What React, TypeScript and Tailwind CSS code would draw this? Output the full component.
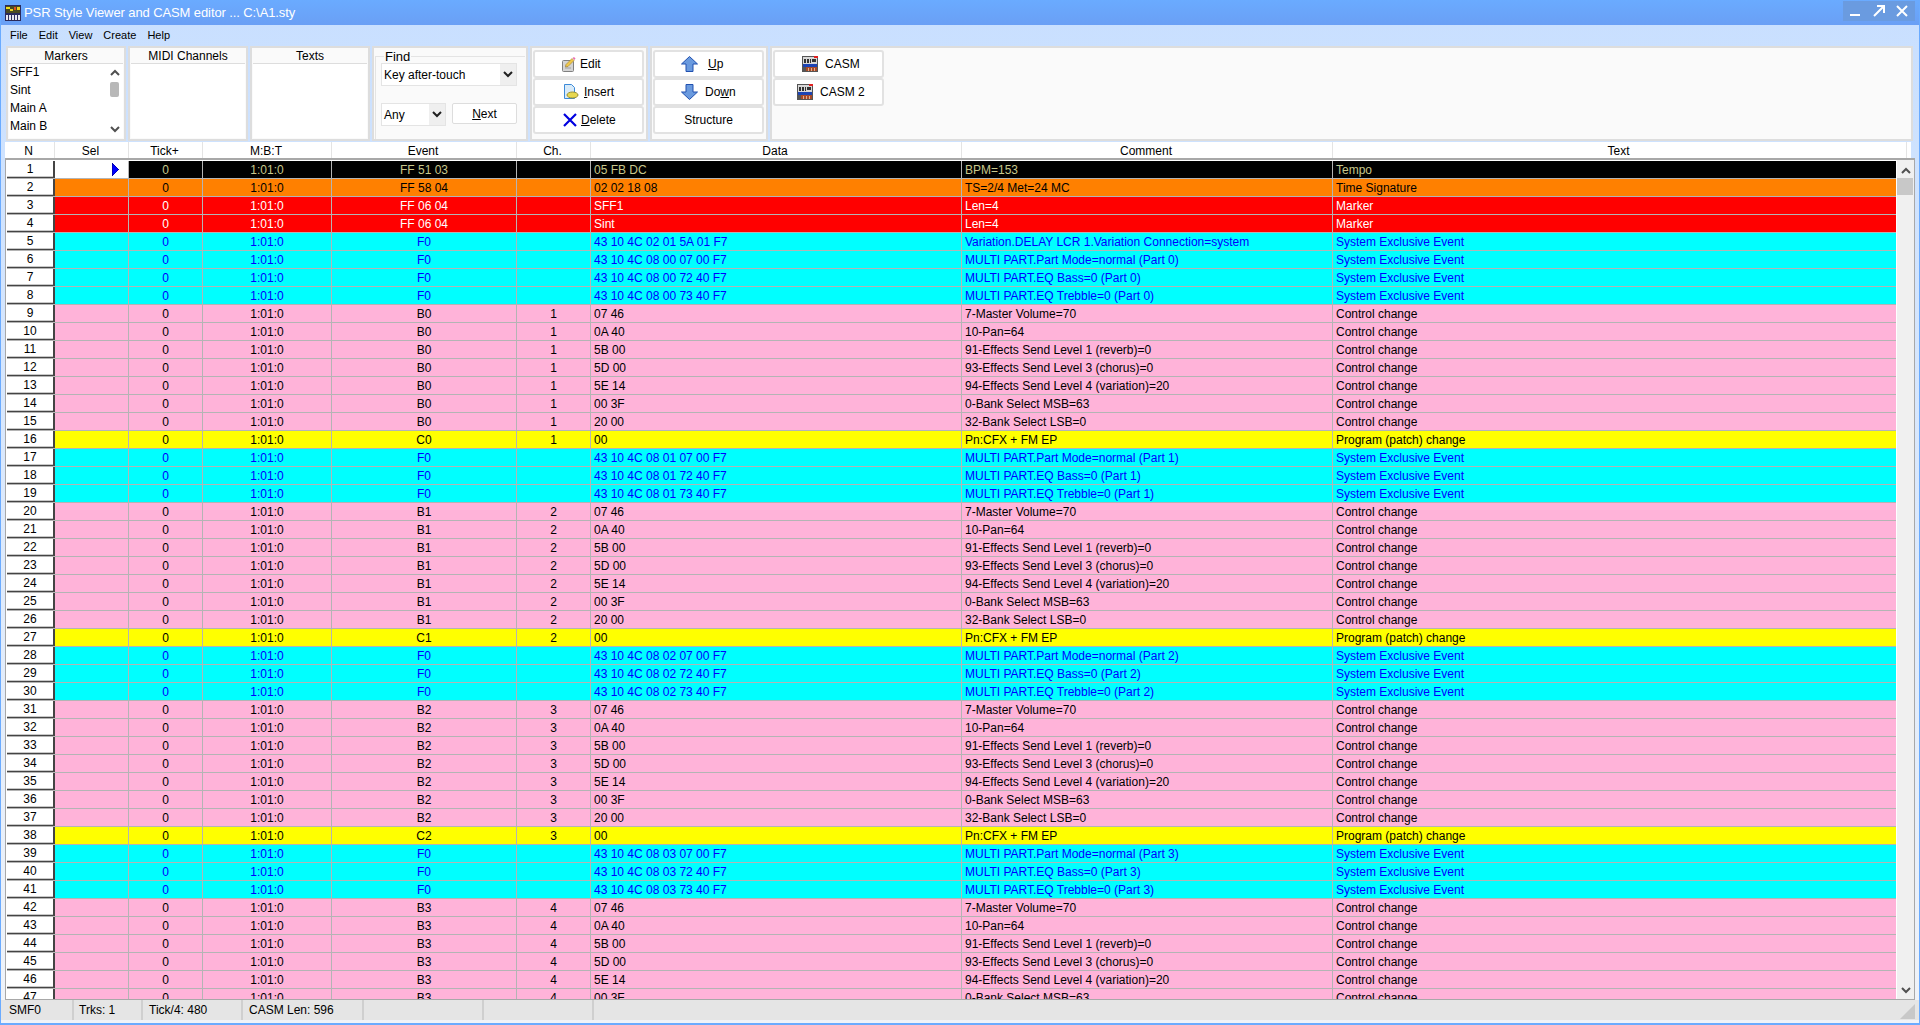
import { ReactNode } from "react";

type Row = {
  kind: "tempo" | "sig" | "marker" | "sysex" | "ctrl" | "prog";
  event: string;
  ch: string;
  data: string;
  comment: string;
  text: string;
};

const rowColors = {
  tempo: "bg-[#000000] text-[#c8c88c]",
  sig: "bg-[#ff8000] text-black",
  marker: "bg-[#ff0000] text-white",
  sysex: "bg-[#00ffff] text-[#0000ff]",
  ctrl: "bg-[#ffb3d9] text-black",
  prog: "bg-[#ffff00] text-black",
};

const rows: Row[] = [
  { kind: "tempo", event: "FF 51 03", ch: "", data: "05 FB DC", comment: "BPM=153", text: "Tempo" },
  { kind: "sig", event: "FF 58 04", ch: "", data: "02 02 18 08", comment: "TS=2/4 Met=24 MC", text: "Time Signature" },
  { kind: "marker", event: "FF 06 04", ch: "", data: "SFF1", comment: "Len=4", text: "Marker" },
  { kind: "marker", event: "FF 06 04", ch: "", data: "Sint", comment: "Len=4", text: "Marker" },
  { kind: "sysex", event: "F0", ch: "", data: "43 10 4C 02 01 5A 01 F7", comment: "Variation.DELAY LCR 1.Variation Connection=system", text: "System Exclusive Event" },
];

function sysexRows(part: number): Row[] {
  return [
    { kind: "sysex", event: "F0", ch: "", data: `43 10 4C 08 0${part} 07 00 F7`, comment: `MULTI PART.Part Mode=normal (Part ${part})`, text: "System Exclusive Event" },
    { kind: "sysex", event: "F0", ch: "", data: `43 10 4C 08 0${part} 72 40 F7`, comment: `MULTI PART.EQ Bass=0 (Part ${part})`, text: "System Exclusive Event" },
    { kind: "sysex", event: "F0", ch: "", data: `43 10 4C 08 0${part} 73 40 F7`, comment: `MULTI PART.EQ Trebble=0 (Part ${part})`, text: "System Exclusive Event" },
  ];
}

const ctrlData = [
  ["07 46", "7-Master Volume=70"],
  ["0A 40", "10-Pan=64"],
  ["5B 00", "91-Effects Send Level 1 (reverb)=0"],
  ["5D 00", "93-Effects Send Level 3 (chorus)=0"],
  ["5E 14", "94-Effects Send Level 4 (variation)=20"],
  ["00 3F", "0-Bank Select MSB=63"],
  ["20 00", "32-Bank Select LSB=0"],
];

for (let part = 0; part < 4; part++) {
  rows.push(...sysexRows(part));
  for (const [data, comment] of ctrlData) {
    rows.push({ kind: "ctrl", event: `B${part}`, ch: String(part + 1), data, comment, text: "Control change" });
  }
  if (part < 3) {
    rows.push({ kind: "prog", event: `C${part}`, ch: String(part + 1), data: "00", comment: "Pn:CFX + FM EP", text: "Program (patch) change" });
  }
}

function Chevron({ up = false, dark = false, className = "" }: { up?: boolean; dark?: boolean; className?: string }) {
  return (
    <svg width="10" height="7" viewBox="0 0 10 7" className={className}>
      <polyline
        points={up ? "1,6 5,2 9,6" : "1,1 5,5 9,1"}
        fill="none"
        stroke={dark ? "#202020" : "#505050"}
        strokeWidth="2"
      />
    </svg>
  );
}

function CasmIcon() {
  return (
    <svg width="16" height="16" viewBox="0 0 16 16" shapeRendering="crispEdges">
      <rect width="16" height="16" fill="#555" />
      <rect x="1" y="1" width="14" height="7" fill="#d8d8d8" />
      <rect x="2" y="3" width="2" height="4" fill="#333" />
      <rect x="5" y="3" width="2" height="4" fill="#333" />
      <rect x="8" y="3" width="1" height="4" fill="#333" />
      <rect x="10" y="3" width="4" height="3" fill="#333" />
      <rect x="12" y="0" width="4" height="2" fill="#e02020" />
      <rect x="1" y="8" width="14" height="3" fill="#1c44b4" />
      <rect x="4" y="11" width="11" height="4" fill="#a84a28" />
      <rect x="6" y="12" width="1" height="3" fill="#e0b090" />
      <rect x="9" y="12" width="1" height="3" fill="#e0b090" />
      <rect x="12" y="12" width="1" height="3" fill="#e0b090" />
    </svg>
  );
}

function AppIcon() {
  return (
    <svg width="16" height="16" viewBox="0 0 16 16" shapeRendering="crispEdges">
      <rect width="16" height="16" fill="#2a2a5a" />
      <rect x="1" y="1" width="14" height="7" fill="#4a4a20" />
      <rect x="1" y="2" width="4" height="2" fill="#f0e020" />
      <rect x="5" y="4" width="3" height="2" fill="#e8d020" />
      <rect x="9" y="2" width="2" height="3" fill="#e05020" />
      <rect x="12" y="2" width="3" height="3" fill="#f0d020" />
      <rect x="1" y="10" width="14" height="5" fill="#e8e8f0" />
      <rect x="3" y="10" width="1" height="5" fill="#303060" />
      <rect x="6" y="10" width="1" height="5" fill="#303060" />
      <rect x="9" y="10" width="1" height="5" fill="#303060" />
      <rect x="12" y="10" width="1" height="5" fill="#303060" />
    </svg>
  );
}

function EditIcon() {
  return (
    <svg width="14" height="15" viewBox="0 0 14 15">
      <rect x="0.5" y="3.5" width="11" height="11" rx="1" fill="#d4d4d4" stroke="#808080" />
      <path d="M3 11h6M3 9h3" stroke="#a0a0a0" />
      <path d="M3.5 10 L4 7.5 L10 1.5 L12 3.5 L6 9.5 Z" fill="#f0c848" stroke="#a08030" strokeWidth="0.6" />
      <path d="M10.5 1 L12 0 L13.5 1.5 L12.5 3 Z" fill="#e870b0" />
    </svg>
  );
}

function InsertIcon() {
  return (
    <svg width="16" height="16" viewBox="0 0 16 16">
      <path d="M1.5 0.5h7l3 3v11h-10z" fill="#d8eaf8" stroke="#3c8ad8" />
      <ellipse cx="9.5" cy="11" rx="5.5" ry="3" fill="#e8d850" stroke="#989030" />
    </svg>
  );
}

function DeleteIcon() {
  return (
    <svg width="14" height="14" viewBox="0 0 14 14">
      <path d="M1 1 L13 13 M13 1 L1 13" stroke="#0000e0" strokeWidth="2.2" fill="none" />
    </svg>
  );
}

function ArrowIcon({ down = false }: { down?: boolean }) {
  return (
    <svg width="17" height="16" viewBox="0 0 17 16" className={down ? "rotate-180" : ""}>
      <path d="M8.5 0.5 L16.5 8 H12 V15.5 H5 V8 H0.5 Z" fill="#6a9ade" stroke="#2050b0" />
    </svg>
  );
}

function Panel({ className, children }: { className: string; children: ReactNode }) {
  return <div className={`border-2 border-[#dddddd] bg-[#fafafa] ${className}`}>{children}</div>;
}

function ListPanel({ title, children }: { title: string; children?: ReactNode }) {
  return (
    <Panel className="w-[120px] flex flex-col">
      <div className="h-[15px] flex items-center justify-center leading-none">{title}</div>
      <div className="flex-1 bg-white mx-px mb-px border-t border-[#dddddd] overflow-hidden">{children}</div>
    </Panel>
  );
}

function ToolButton({ icon, children, layout }: { icon?: ReactNode; children: ReactNode; layout: string }) {
  return (
    <button className={`h-[28px] w-[111px] border-2 border-[#e2e2e2] rounded-[3px] bg-white flex items-center ${layout}`}>
      {icon}
      <span>{children}</span>
    </button>
  );
}

function Cell({ className, children }: { className: string; children?: ReactNode }) {
  return <div className={`shrink-0 h-full border-r border-[#b4b4b4] flex items-center whitespace-nowrap overflow-hidden ${className}`}>{children}</div>;
}

function HeaderCell({ className, children }: { className: string; children: ReactNode }) {
  return <div className={`shrink-0 h-full pt-px pr-[2px] border-r border-[#e4e4e4] flex items-center justify-center ${className}`}>{children}</div>;
}

export default function App() {
  return (
    <div className="w-[1920px] h-[1025px] overflow-hidden flex flex-col font-['Liberation_Sans',sans-serif] text-[12px] text-black bg-linear-to-b from-[#c8dfff] to-[#f0f3f8] border-l border-r border-b-2 border-[#6aabff]">
      {/* title bar */}
      <div className="h-[25px] shrink-0 -mx-px pl-[5px] flex items-center bg-linear-to-b from-[#6aabff] to-[#6a9ff5] text-white">
        <AppIcon />
        <span className="ml-[3px] text-[13px] -tracking-[0.1px]">PSR Style Viewer and CASM editor ... C:\A1.sty</span>
        <div className="ml-auto mb-[3px] mr-[5px] h-[20px] w-[72px] bg-[#6a9be0] flex items-center justify-around px-[2px]">
          <svg width="14" height="14" viewBox="0 0 14 14"><rect x="1" y="10" width="10" height="2" fill="white" /></svg>
          <svg width="14" height="14" viewBox="0 0 14 14"><path d="M2 12 L11 3 M5 2 H12 V9" stroke="white" strokeWidth="2" fill="none" /></svg>
          <svg width="14" height="14" viewBox="0 0 14 14"><path d="M2 2 L12 12 M12 2 L2 12" stroke="white" strokeWidth="2" fill="none" /></svg>
        </div>
      </div>

      {/* menu */}
      <div className="h-[21px] shrink-0 pl-[9px] flex items-center gap-[11px] text-[11px]">
        <span>File</span>
        <span>Edit</span>
        <span>View</span>
        <span>Create</span>
        <span>Help</span>
      </div>

      {/* toolbar */}
      <div className="h-[95px] shrink-0 ml-[5px] mr-[6px] flex gap-[2px]">
        <Panel className="w-[120px] flex flex-col">
          <div className="h-[15px] flex items-center justify-center leading-none">Markers</div>
          <div className="flex-1 bg-white mx-px mb-px border-t border-[#dddddd] relative pl-[1px] flex flex-col">
            {["SFF1", "Sint", "Main A", "Main B"].map((m) => (
              <div key={m} className="h-[18px] pb-[2px] flex items-center">{m}</div>
            ))}
            <Chevron up className="absolute right-[3px] top-[5px]" />
            <div className="absolute right-[4px] top-[18px] w-[9px] h-[15px] rounded-[2px] bg-[#b8b8b8]" />
            <Chevron className="absolute right-[3px] bottom-[5px]" />
          </div>
        </Panel>
        <ListPanel title="MIDI Channels" />
        <ListPanel title="Texts" />
        <Panel className="w-[156px] px-[1px]">
          <fieldset className="h-[89px] mt-[2px] border-l border-t border-[#e4e4e4] pl-[5px] pr-[8px]">
            <legend className="ml-[3px] px-[1px] leading-none text-[13px]">Find</legend>
            <div className="h-[23px] border border-[#e4e4e4] bg-white flex items-center justify-between pl-[2px]">
              <span>Key after-touch</span>
              <div className="w-[16px] h-full bg-[#efefef] flex items-center justify-center"><Chevron dark /></div>
            </div>
            <div className="mt-[17px] flex items-start justify-between">
              <div className="w-[65px] h-[23px] border border-[#e4e4e4] bg-white flex items-center justify-between pl-[2px]">
                <span>Any</span>
                <div className="w-[16px] h-full bg-[#efefef] flex items-center justify-center"><Chevron dark /></div>
              </div>
              <button className="w-[65px] h-[21px] border border-[#dddddd] rounded-[2px] bg-white flex items-center justify-center">
                <span><u>N</u>ext</span>
              </button>
            </div>
          </fieldset>
        </Panel>
        <Panel className="w-[118px] pl-[1px] pt-[2px]">
          <ToolButton icon={<EditIcon />} layout="pl-[27px] gap-[4px]">Edit</ToolButton>
          <ToolButton icon={<InsertIcon />} layout="pl-[28px] gap-[5px]"><u>I</u>nsert</ToolButton>
          <ToolButton icon={<DeleteIcon />} layout="pl-[28px] gap-[4px]"><u>D</u>elete</ToolButton>
        </Panel>
        <Panel className="w-[118px] pl-[1px] pt-[2px]">
          <ToolButton icon={<ArrowIcon />} layout="pl-[26px] gap-[10px]"><u>U</u>p</ToolButton>
          <ToolButton icon={<ArrowIcon down />} layout="pl-[26px] gap-[7px]">Do<u>w</u>n</ToolButton>
          <ToolButton layout="justify-center">Structure</ToolButton>
        </Panel>
        <Panel className="flex-1 pl-[1px] pt-[2px]">
          <ToolButton icon={<CasmIcon />} layout="pl-[27px] gap-[7px]">CASM</ToolButton>
          <ToolButton icon={<CasmIcon />} layout="pl-[22px] gap-[7px]">CASM 2</ToolButton>
        </Panel>
      </div>

      {/* column headers */}
      <div className="h-[16px] shrink-0 mt-px ml-[4px] mr-[8px] flex bg-white text-[12px]">
        <HeaderCell className="w-[50px]">N</HeaderCell>
        <HeaderCell className="w-[74px]">Sel</HeaderCell>
        <HeaderCell className="w-[74px]">Tick+</HeaderCell>
        <HeaderCell className="w-[129px]">M:B:T</HeaderCell>
        <HeaderCell className="w-[185px]">Event</HeaderCell>
        <HeaderCell className="w-[74px]">Ch.</HeaderCell>
        <HeaderCell className="w-[371px]">Data</HeaderCell>
        <HeaderCell className="w-[371px]">Comment</HeaderCell>
        <HeaderCell className="w-[574px]">Text</HeaderCell>
      </div>

      {/* event grid */}
      <div className="h-[842px] shrink-0 ml-[4px] mr-[4px] flex border-l border-r border-t-2 border-b border-[#a8a8a8] bg-white">
        <div className="flex-1 overflow-hidden pl-px pt-px">
          {rows.slice(0, 47).map((r, i) => (
            <div key={i} className={`h-[18px] flex border-b border-[#b4b4b4] ${rowColors[r.kind]}`}>
              <div className="w-[48px] shrink-0 h-full bg-white text-black border-r-2 border-b border-[#444444] flex items-center justify-center shadow-[inset_0_-1px_0_#c8c8c8]">
                {i + 1}
              </div>
              <Cell className={`w-[74px] justify-end ${i === 0 ? "bg-white" : ""}`}>
                {i === 0 && (
                  <svg width="8" height="13" viewBox="0 0 8 13" className="mr-[8px]" shapeRendering="crispEdges">
                    <path d="M0 0 L7 6.5 L0 13 Z" fill="#0000ff" stroke="#000080" strokeWidth="0.5" />
                  </svg>
                )}
              </Cell>
              <Cell className="w-[74px] justify-center">0</Cell>
              <Cell className="w-[129px] justify-center">1:01:0</Cell>
              <Cell className="w-[185px] justify-center">{r.event}</Cell>
              <Cell className="w-[74px] justify-center">{r.ch}</Cell>
              <Cell className="w-[371px] pl-[3px]">{r.data}</Cell>
              <Cell className="w-[371px] pl-[3px]">{r.comment}</Cell>
              <div className="w-[563px] shrink-0 h-full pl-[3px] flex items-center whitespace-nowrap">{r.text}</div>
            </div>
          ))}
        </div>
        <div className="w-[18px] shrink-0 bg-[#f0f0f0] border-l border-white flex flex-col items-center relative">
          <Chevron up className="mt-[7px]" />
          <div className="absolute top-[18px] left-0 right-px h-[17px] bg-[#c8c8c8]" />
          <Chevron className="mt-auto mb-[5px]" />
        </div>
      </div>

      {/* status bar */}
      <div className="h-[20px] shrink-0 flex items-center bg-[#e5e5e5] text-[12px] relative">
        <div className="w-[73px] h-full pl-[8px] flex items-center border-r-2 border-[#cfcfcf]">SMF0</div>
        <div className="w-[69px] h-full pl-[5px] flex items-center border-r-2 border-[#cfcfcf]">Trks: 1</div>
        <div className="w-[100px] h-full pl-[6px] flex items-center border-r-2 border-[#cfcfcf]">Tick/4: 480</div>
        <div className="w-[121px] h-full pl-[6px] flex items-center border-r-2 border-[#cfcfcf]">CASM Len: 596</div>
        <div className="w-[120px] h-full border-r-2 border-[#cfcfcf]" />
        <div className="w-[110px] h-full border-r-2 border-[#cfcfcf]" />
        <svg width="15" height="15" viewBox="0 0 15 15" className="absolute right-[4px] bottom-[1px]">
          <path d="M15 0 V15 H0 Z" fill="#c8c8c8" />
        </svg>
      </div>
    </div>
  );
}
